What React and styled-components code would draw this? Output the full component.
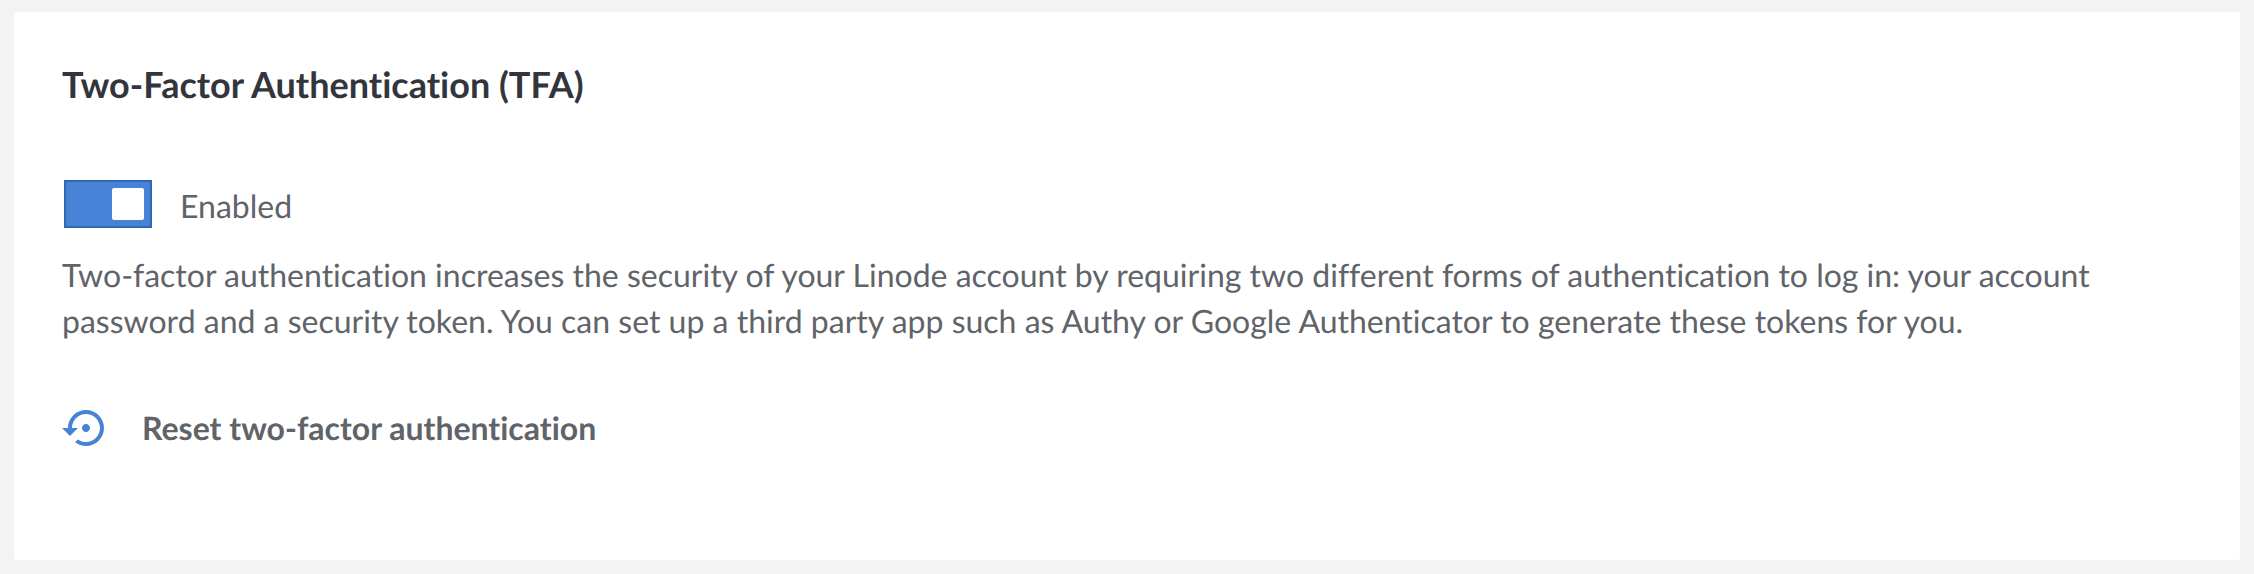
import React, { useState } from "react";
import styled, { createGlobalStyle } from "styled-components";

const GlobalStyle = createGlobalStyle`
  *, *::before, *::after { box-sizing: border-box; }
  body {
    margin: 0;
    background: #f3f3f3;
    color: #606469;
    font-family: Lato, sans-serif;
    font-size: 32px;
    line-height: 46px;
    font-variant-ligatures: none;
    text-rendering: geometricPrecision;
  }
`;

const Page = styled.main`
  padding: 12px 14px;
`;

const Panel = styled.section`
  padding: 48px 48px 108px;
  border-radius: 3px;
  background: #fff;
`;

const Title = styled.h2`
  margin: 0 0 72px;
  color: #32363c;
  font-size: 36px;
  font-weight: 700;
  line-height: 48px;
`;

const ToggleLabel = styled.label`
  display: flex;
  width: fit-content;
  align-items: flex-start;
  gap: 28px;
  padding-left: 2px;
  line-height: 52px;
  cursor: pointer;
`;

const Toggle = styled.input`
  appearance: none;
  display: flex;
  align-items: center;
  width: 88px;
  height: 48px;
  margin: 0;
  padding: 0 6px;
  border: 2px solid #3367b0;
  background: #4683d6;
  cursor: pointer;

  &::before {
    content: "";
    width: 32px;
    height: 32px;
    border-radius: 2px;
    background: #fff;
  }

  &:checked::before { margin-left: auto; }
`;

const Description = styled.p`
  max-width: 2048px;
  margin: 20px 0 60px;
`;

const ResetButton = styled.button`
  display: flex;
  align-items: center;
  gap: 32px;
  padding: 0;
  border: 0;
  background: none;
  color: #606469;
  font: inherit;
  font-weight: 700;
  font-variant-ligatures: none;
  text-rendering: inherit;
  cursor: pointer;
`;

const ResetIcon = styled.svg`
  width: 48px;
  height: 48px;
  color: #4683d6;
`;

export default function App() {
  const [enabled, setEnabled] = useState(true);
  return (
    <Page>
      <GlobalStyle />
      <Panel>
        <Title>Two-Factor Authentication (TFA)</Title>
        <ToggleLabel>
          <Toggle type="checkbox" role="switch" checked={enabled} onChange={(e) => setEnabled(e.target.checked)} />
          {enabled ? "Enabled" : "Disabled"}
        </ToggleLabel>
        <Description>
          Two-factor authentication increases the security of your Linode account by requiring two different forms of
          authentication to log in: your account password and a security token. You can set up a third party app such
          as Authy or Google Authenticator to generate these tokens for you.
        </Description>
        <ResetButton type="button">
          <ResetIcon viewBox="0 0 24 24" fill="currentColor" aria-hidden="true">
            <path d="M14 12c0-1.100-.9-2-2-2s-2 .9-2 2 .9 2 2 2 2-.9 2-2zm-2-9c-4.970 0-9 4.030-9 9H0l4 4 4-4H5c0-3.870 3.130-7 7-7s7 3.130 7 7-3.130 7-7 7c-1.510 0-2.910-.49-4.060-1.300l-1.420 1.440C8.040 20.300 9.940 21 12 21c4.970 0 9-4.030 9-9s-4.030-9-9-9z" />
          </ResetIcon>
          Reset two-factor authentication
        </ResetButton>
      </Panel>
    </Page>
  );
}
